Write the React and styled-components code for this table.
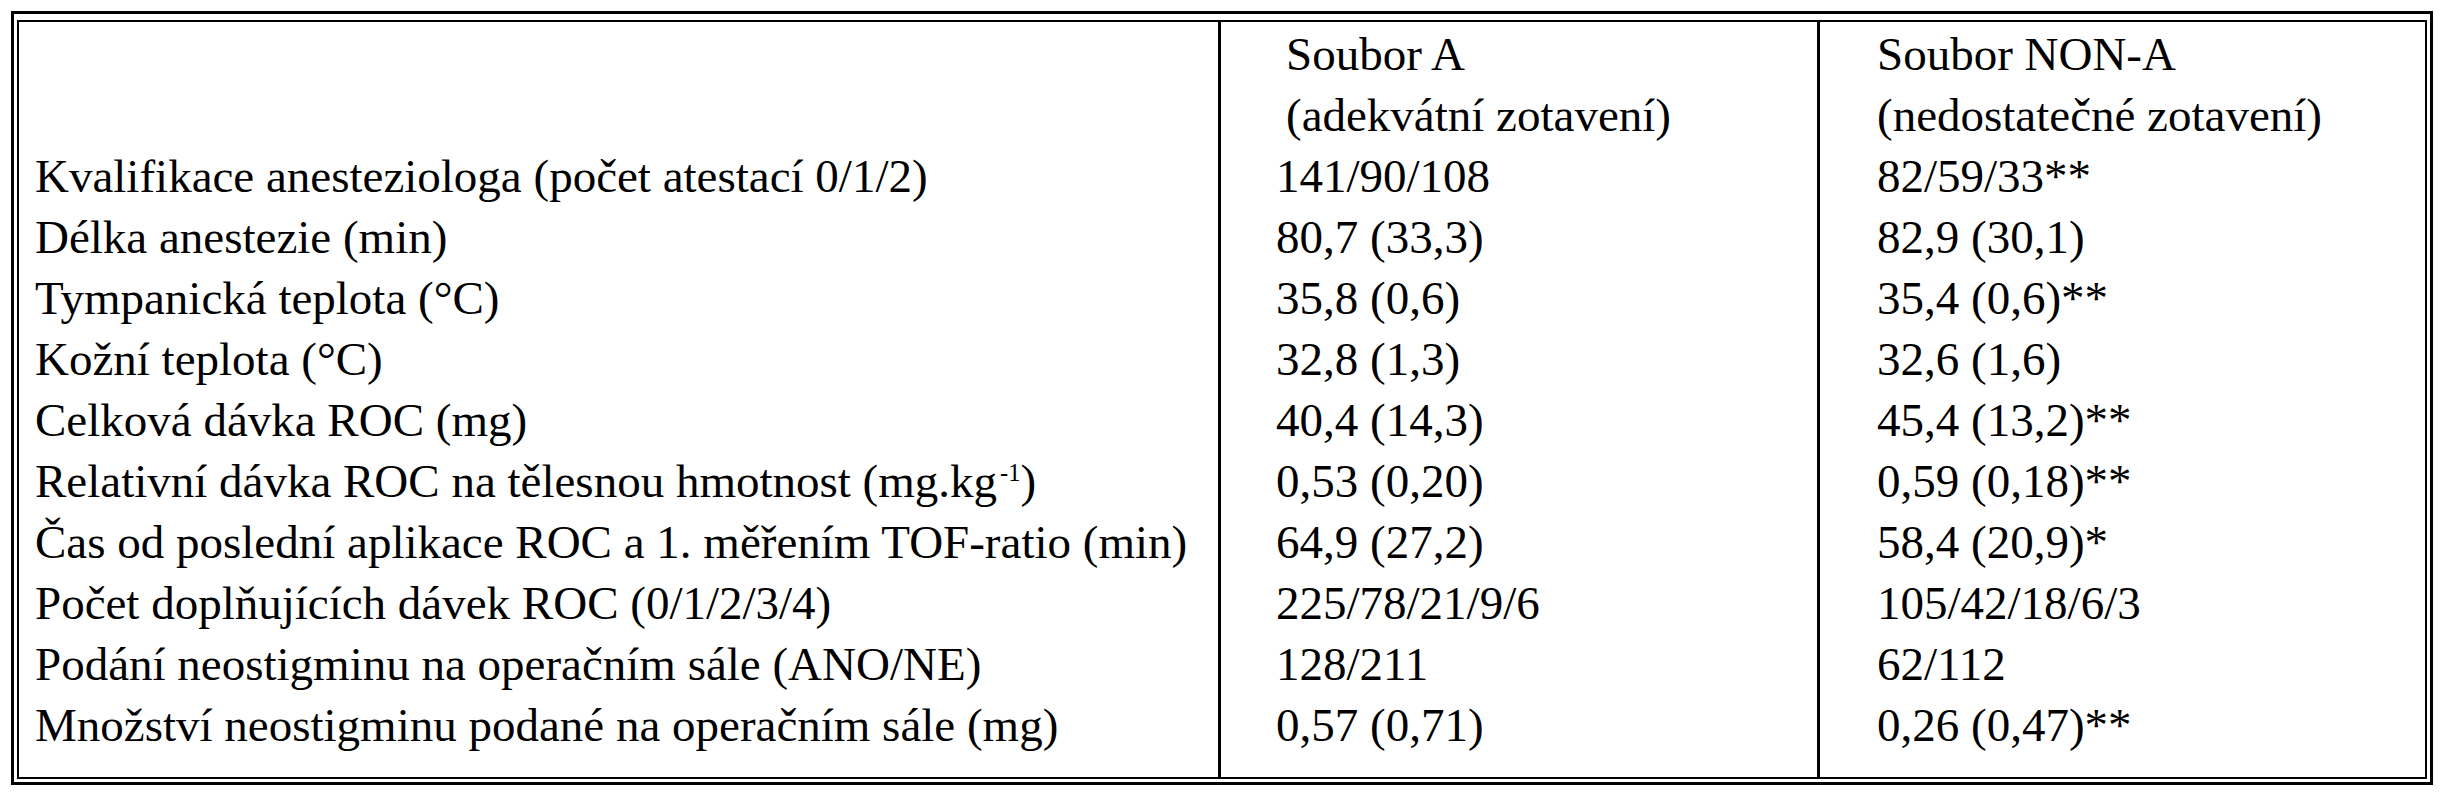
import styled, { createGlobalStyle } from "styled-components";

const GlobalStyle = createGlobalStyle`
	html, body {
		margin: 0;
		padding: 0;
		background: #fff;
	}
	body {
		font-family: "Liberation Serif", "Times New Roman", serif;
		color: #000;
	}
`;

const Page = styled.div`
	padding: 11px;
`;

const Frame = styled.div`
	width: 2422px;
	box-sizing: border-box;
	border: 3px solid #000;
	padding: 6px 3px 3px 3px;
`;

const Table = styled.div`
	display: grid;
	grid-template-columns: 1199px 599px 608px;
	border: 2px solid #000;
`;

const Cell = styled.div`
	font-size: 47px;
	line-height: 61px;
	white-space: nowrap;
	padding-left: ${(p) => (p.$col === 0 ? "16px" : p.$col === 1 ? "55px" : "57px")};
	text-indent: ${(p) => p.$indent || 0}px;
	padding-top: ${(p) => (p.$first ? "2px" : "0")};
	padding-bottom: ${(p) => (p.$last ? "21px" : "0")};
	border-left: ${(p) => (p.$col === 0 ? "none" : "3px solid #000")};
`;

const Sup = styled.sup`
	font-size: 0.52em;
	line-height: 0;
	vertical-align: 0.66em;
	margin-left: 3px;
`;

const header = [
	["", "Soubor A", "Soubor NON-A"],
	["", "(adekvátní zotavení)", "(nedostatečné zotavení)"],
];

const rows = [
	["Kvalifikace anesteziologa (počet atestací 0/1/2)", "141/90/108", "82/59/33**"],
	["Délka anestezie (min)", "80,7 (33,3)", "82,9 (30,1)"],
	["Tympanická teplota (°C)", "35,8 (0,6)", "35,4 (0,6)**"],
	["Kožní teplota (°C)", "32,8 (1,3)", "32,6 (1,6)"],
	["Celková dávka ROC (mg)", "40,4 (14,3)", "45,4 (13,2)**"],
	[
		<>
			Relativní dávka ROC na tělesnou hmotnost (mg.kg<Sup>-1</Sup>)
		</>,
		"0,53 (0,20)",
		"0,59 (0,18)**",
	],
	["Čas od poslední aplikace ROC a 1. měřením TOF-ratio (min)", "64,9 (27,2)", "58,4 (20,9)*"],
	["Počet doplňujících dávek ROC (0/1/2/3/4)", "225/78/21/9/6", "105/42/18/6/3"],
	["Podání neostigminu na operačním sále (ANO/NE)", "128/211", "62/112"],
	["Množství neostigminu podané na operačním sále (mg)", "0,57 (0,71)", "0,26 (0,47)**"],
];

const App = () => {
	const all = [...header, ...rows];

	return (
		<>
			<GlobalStyle />
			<Page>
				<Frame>
					<Table>
						{all.map((row, r) =>
							row.map((text, c) => (
								<Cell
									key={r + "-" + c}
									$col={c}
									$first={r === 0}
									$last={r === all.length - 1}
									$indent={r < 2 && c === 1 ? 10 : 0}
								>
									{text}
								</Cell>
							))
						)}
					</Table>
				</Frame>
			</Page>
		</>
	);
};

export default App;
